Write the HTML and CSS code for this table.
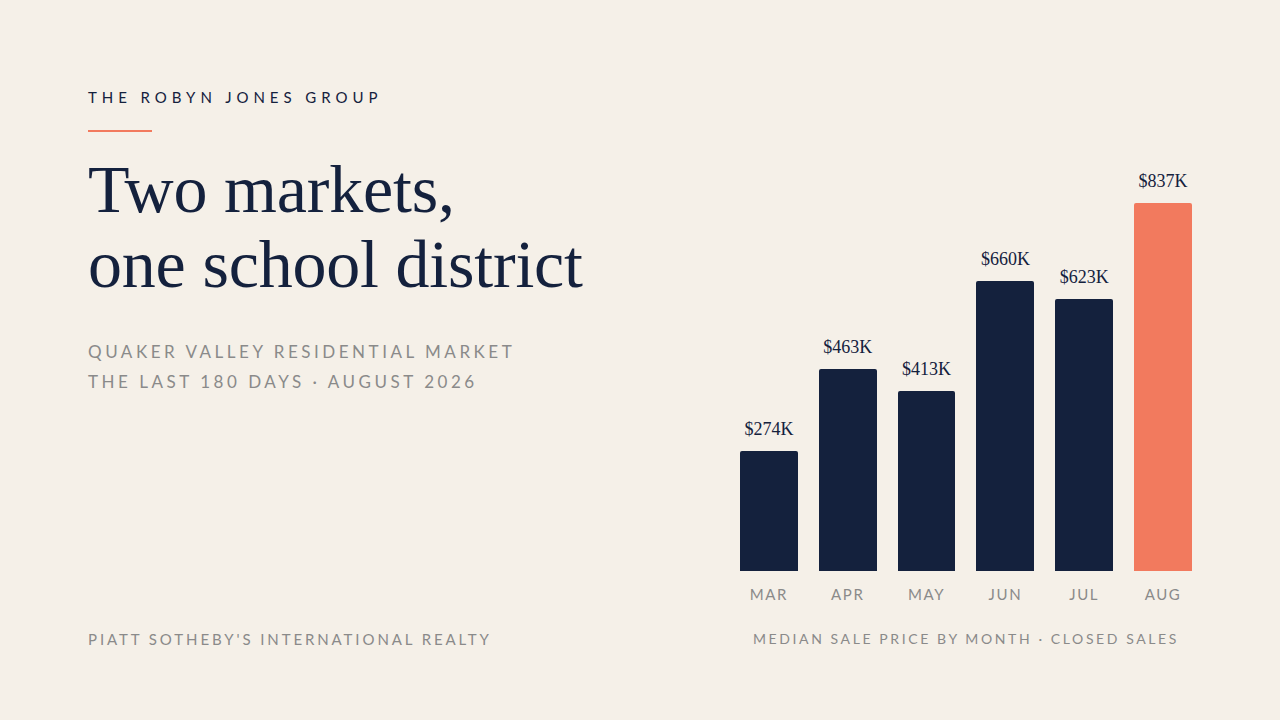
FILE: index.html
```html
<!DOCTYPE html>
<html lang="en">
<head>
<meta charset="utf-8">
<title>Two markets, one school district</title>
<link rel="stylesheet" href="styles.css">
</head>
<body>
<div class="slide">
  <section class="intro">
    <div class="brand">THE ROBYN JONES GROUP</div>
    <div class="rule"></div>
    <h1 class="headline">Two markets,<br>one school district</h1>
    <p class="subtitle">QUAKER VALLEY RESIDENTIAL MARKET<br>THE LAST 180 DAYS · AUGUST 2026</p>
  </section>
  <section class="chart">
    <div class="bars">
      <div class="col"><span class="value">$274K</span><div class="bar" style="height:120px"></div><span class="month">MAR</span></div>
      <div class="col"><span class="value">$463K</span><div class="bar" style="height:202px"></div><span class="month">APR</span></div>
      <div class="col"><span class="value">$413K</span><div class="bar" style="height:180px"></div><span class="month">MAY</span></div>
      <div class="col"><span class="value">$660K</span><div class="bar" style="height:290px"></div><span class="month">JUN</span></div>
      <div class="col"><span class="value">$623K</span><div class="bar" style="height:272px"></div><span class="month">JUL</span></div>
      <div class="col"><span class="value">$837K</span><div class="bar bar-accent" style="height:368px"></div><span class="month">AUG</span></div>
    </div>
  </section>
  <div class="foot foot-left">PIATT SOTHEBY'S INTERNATIONAL REALTY</div>
  <div class="foot foot-right">MEDIAN SALE PRICE BY MONTH · CLOSED SALES</div>
</div>
</body>
</html>
```

FILE: styles.css
```css
html, body {
  margin: 0;
  padding: 0;
  background: #f5f0e8;
}

.slide {
  box-sizing: border-box;
  width: 1280px;
  height: 720px;
  padding: 88px 88px 72px 88px;
  display: grid;
  grid-template-columns: 1fr 452px;
  grid-template-rows: 1fr auto;
  font-family: "Lato", "Liberation Sans", sans-serif;
}

.intro {
  align-self: start;
}

.brand {
  font-size: 15px;
  line-height: 18px;
  letter-spacing: 4.95px;
  color: #14213d;
}

.rule {
  width: 64px;
  height: 2px;
  margin-top: 24px;
  background: #f27a5e;
}

.headline {
  margin: 20px 0 0 0;
  font-family: "Liberation Serif", "DejaVu Serif", serif;
  font-weight: 400;
  font-size: 68px;
  line-height: 75px;
  color: #14213d;
  letter-spacing: -0.2px;
}

.subtitle {
  margin: 35px 0 0 0;
  font-size: 17px;
  line-height: 30px;
  letter-spacing: 3.52px;
  color: #8a8a8a;
}

.chart {
  align-self: end;
  margin-bottom: 27px;
}

.bars {
  display: grid;
  grid-template-columns: repeat(6, 1fr);
  column-gap: 21px;
  align-items: end;
}

.col {
  display: flex;
  flex-direction: column;
  align-items: center;
}

.value {
  font-family: "Liberation Serif", "DejaVu Serif", serif;
  font-size: 18px;
  line-height: 22px;
  margin-bottom: 11px;
  color: #14213d;
}

.bar {
  width: 100%;
  background: #14213d;
  border-radius: 2px 2px 0 0;
}

.bar-accent {
  background: #f27a5e;
}

.month {
  margin-top: 14px;
  font-size: 15px;
  line-height: 18px;
  letter-spacing: 1.6px;
  color: #8a8a8a;
}

.foot {
  line-height: 18px;
  color: #8a8a8a;
  white-space: nowrap;
}

.foot-left {
  font-size: 15px;
  letter-spacing: 2.9px;
}

.foot-right {
  font-size: 14px;
  letter-spacing: 2.6px;
  text-align: center;
}
```
